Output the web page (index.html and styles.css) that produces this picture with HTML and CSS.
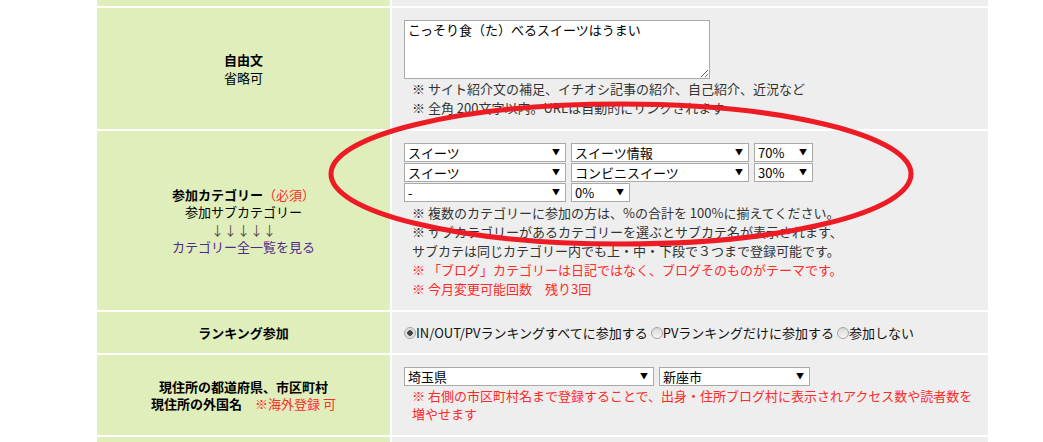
FILE: index.html
```html
<!DOCTYPE html>
<html lang="ja">
<head>
    <meta charset="UTF-8">
    <title>ブログ情報の編集</title>
    <link rel="stylesheet" href="styles.css">
</head>
<body>
    <table class="form-table">
        <tr class="row-cut">
            <th></th>
            <td></td>
        </tr>
        <tr>
            <th><b>自由文</b><br>省略可</th>
            <td>
                <textarea class="intro">こっそり食（た）べるスイーツはうまい</textarea>
                <p class="note">※ サイト紹介文の補足、イチオシ記事の紹介、自己紹介、近況など<br>※ 全角 200文字以内。URLは自動的にリンクされます</p>
            </td>
        </tr>
        <tr>
            <th>
                <b>参加カテゴリー</b><span class="red">（必須）</span><br>
                参加サブカテゴリー<br>
                <span class="arrows">↓↓↓↓↓</span><br>
                <a href="#" class="cat-link">カテゴリー全一覧を見る</a>
            </th>
            <td>
                <div class="sel-row">
                    <span class="pick w-cat"><select><option>スイーツ</option></select></span>
                    <span class="pick w-sub"><select><option>スイーツ情報</option></select></span>
                    <span class="pick w-pct"><select><option>70%</option></select></span>
                </div>
                <div class="sel-row">
                    <span class="pick w-cat"><select><option>スイーツ</option></select></span>
                    <span class="pick w-sub"><select><option>コンビニスイーツ</option></select></span>
                    <span class="pick w-pct"><select><option>30%</option></select></span>
                </div>
                <div class="sel-row">
                    <span class="pick w-cat"><select><option>-</option></select></span>
                    <span class="pick w-pct"><select><option>0%</option></select></span>
                </div>
                <p class="note">
                    ※ 複数のカテゴリーに参加の方は、%の合計を 100%に揃えてください。<br>
                    ※ サブカテゴリーがあるカテゴリーを選ぶとサブカテ名が表示されます、<br>
                    サブカテは同じカテゴリー内でも上・中・下段で３つまで登録可能です。<br>
                    <span class="red">※ 「ブログ」カテゴリーは日記ではなく、ブログそのものがテーマです。</span><br>
                    <span class="red">※ 今月変更可能回数　残り3回</span>
                </p>
            </td>
        </tr>
        <tr>
            <th><b>ランキング参加</b></th>
            <td>
                <div class="radio-line">
                    <label><input type="radio" name="rank" checked>IN/OUT/PVランキングすべてに参加する</label>
                    <label><input type="radio" name="rank">PVランキングだけに参加する</label>
                    <label><input type="radio" name="rank">参加しない</label>
                </div>
            </td>
        </tr>
        <tr>
            <th>
                <b>現住所の都道府県、市区町村</b><br>
                <b>現住所の外国名</b>　<span class="red">※海外登録 可</span>
            </th>
            <td class="area">
                <div class="sel-row">
                    <span class="pick w-pref"><select><option>埼玉県</option></select></span>
                    <span class="pick w-city"><select><option>新座市</option></select></span>
                </div>
                <p class="note red tight">※ 右側の市区町村名まで登録することで、出身・住所ブログ村に表示されアクセス数や読者数を増やせます</p>
            </td>
        </tr>
        <tr class="row-next">
            <th></th>
            <td></td>
        </tr>
    </table>

    <!-- red marker circled on the screenshot -->
    <svg class="marker" width="1043" height="442" viewBox="0 0 1043 442">
        <ellipse cx="621" cy="174" rx="290" ry="70" fill="none" stroke="#ed1c24" stroke-width="5"/>
    </svg>
</body>
</html>
```

FILE: styles.css
```css
* {
    margin: 0;
    padding: 0;
    box-sizing: border-box;
}

body {
    font-family: "Noto Sans CJK JP", "Noto Sans", sans-serif;
    font-size: 13px;
    color: #111;
    background: #fff;
    position: relative;
    height: 442px;
    overflow: hidden;
}

/* Form table */
.form-table {
    margin: -2px 0 0 95px;
    border-spacing: 2px;
    width: 895px;
}

.form-table th {
    width: 293px;
    background: #dfeebb;
    font-weight: normal;
    text-align: center;
    vertical-align: middle;
    line-height: 17.5px;
    color: #000;
}

.form-table td {
    background: #eeeeee;
    padding: 12px 10px 12px 12px;
    vertical-align: middle;
    line-height: 19px;
}

.form-table b {
    font-weight: bold;
}

.row-cut th,
.row-cut td {
    height: 6px;
    padding: 0;
}

.row-next th,
.row-next td {
    height: 40px;
}

.red {
    color: #ff2a2a;
}

.arrows {
    color: #5a4650;
}

.cat-link {
    color: #51298c;
    text-decoration: none;
}

/* Inputs */
.intro {
    display: block;
    width: 306px;
    height: 59px;
    border: 1px solid #a9a9a9;
    background: #fff;
    font-family: inherit;
    font-size: 13px;
    line-height: 18px;
    padding: 0 3px;
    color: #000;
}

.note {
    margin-left: 8px;
    color: #333;
}

.note.red {
    color: #ff2a2a;
}

.note.tight {
    line-height: 18px;
}

.sel-row {
    display: flex;
    gap: 5px;
    margin-bottom: 1px;
}

.pick {
    position: relative;
    display: block;
    height: 19px;
}

.pick select {
    appearance: none;
    -webkit-appearance: none;
    width: 100%;
    height: 19px;
    border: 1px solid #a9a9a9;
    border-radius: 0;
    background: #fff;
    font-family: inherit;
    font-size: 13px;
    line-height: 17px;
    padding: 0 3px;
    color: #000;
}

.pick::after {
    content: "▼";
    position: absolute;
    right: 6px;
    top: 3px;
    font-size: 8px;
    line-height: 12px;
    color: #000;
    pointer-events: none;
}

.w-cat { width: 162px; }
.w-sub { width: 178px; }
.w-pct { width: 59px; }
.w-pref { width: 250px; }
.w-city { width: 151px; }

.area {
    padding-top: 13px;
}

/* Radios */
.radio-line {
    display: flex;
    align-items: center;
    gap: 3px;
    height: 17px;
}

.radio-line label {
    display: flex;
    align-items: center;
}

.radio-line input {
    appearance: none;
    -webkit-appearance: none;
    width: 12px;
    height: 12px;
    border: 1px solid #a4a4a4;
    border-radius: 50%;
    background: linear-gradient(#d8d8d8, #f6f6f6);
}

.radio-line input:checked {
    background: radial-gradient(circle, #444 0 2.5px, #d8d8d8 3px, #f4f4f4);
}

/* Marker overlay */
.marker {
    position: absolute;
    left: 0;
    top: 0;
    pointer-events: none;
}
```
